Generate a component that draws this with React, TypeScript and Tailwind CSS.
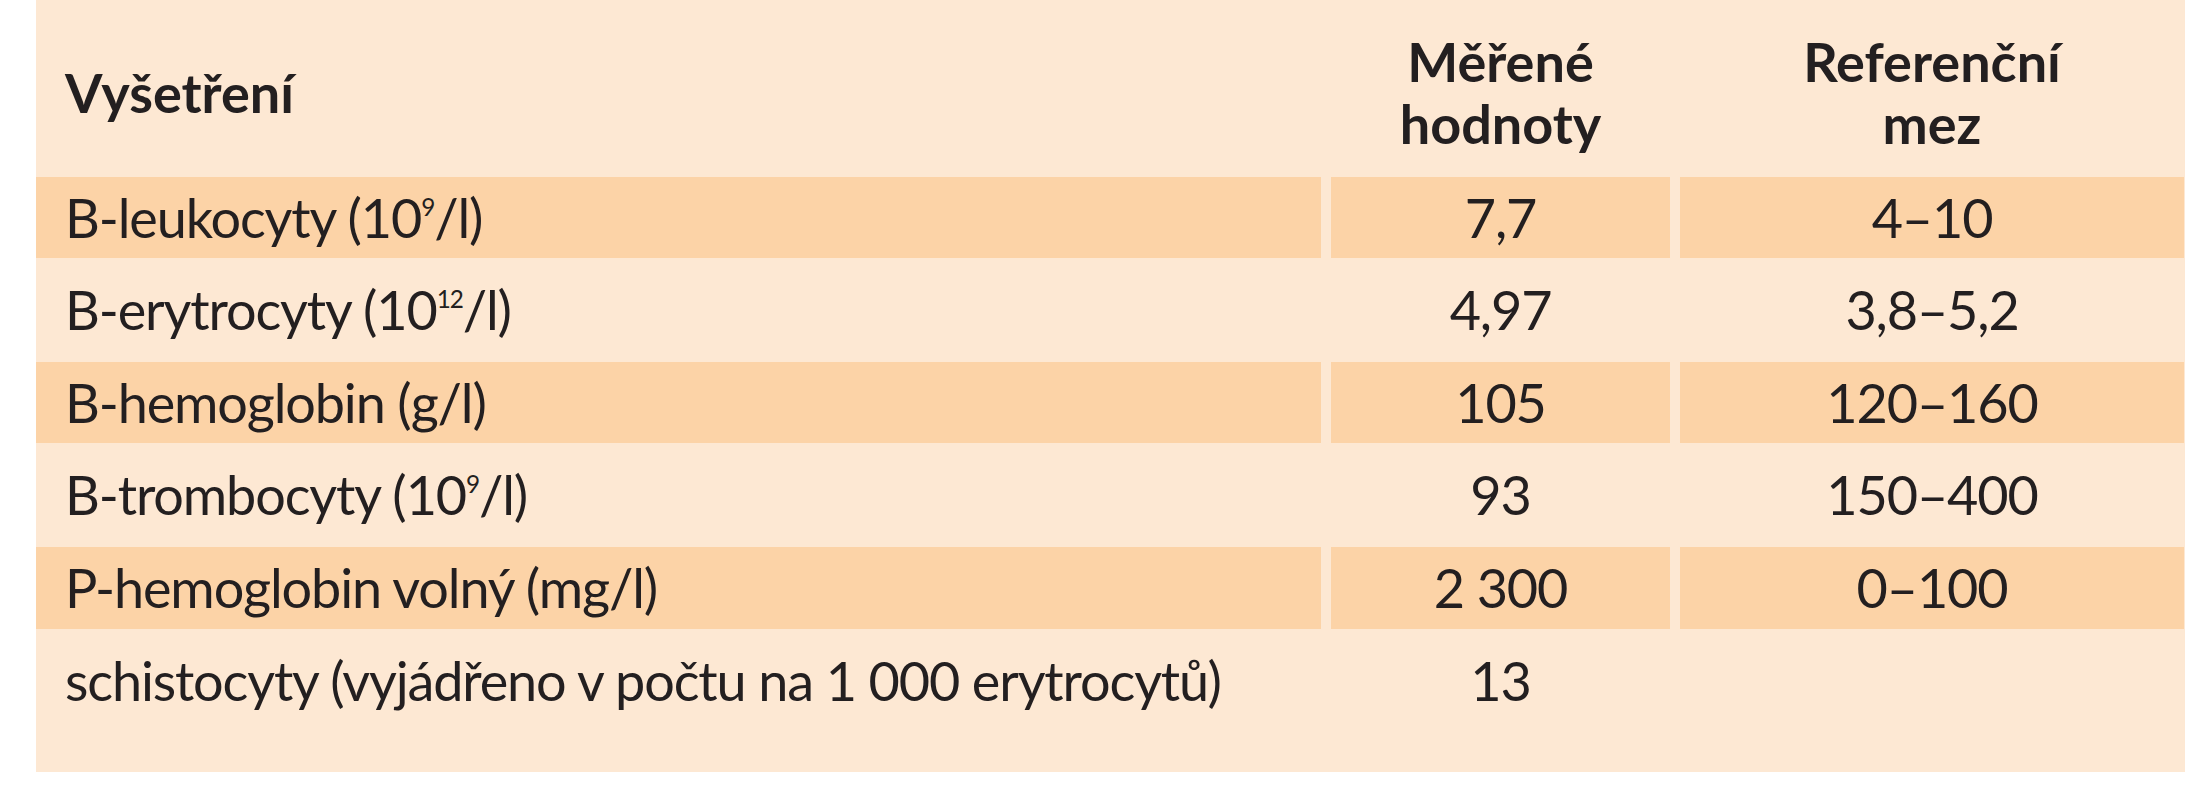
import React from "react";

const LIGHT = "bg-[#fde8d3]";

type Row = { name: React.ReactNode; value: string; ref: string; dark: boolean; h: string };

const Sup = ({ children }: { children: React.ReactNode }) => (
  <sup className="text-[0.45em] relative top-[-0.9em] align-baseline">{children}</sup>
);

const rows: Row[] = [
  {
    name: (
      <>
        B-leukocyty (10<Sup>9</Sup>/l)
      </>
    ),
    value: "7,7",
    ref: "4–10",
    dark: true,
    h: "h-[81px]",
  },
  {
    name: (
      <>
        B-erytrocyty (10<Sup>12</Sup>/l)
      </>
    ),
    value: "4,97",
    ref: "3,8–5,2",
    dark: false,
    h: "h-[104px]",
  },
  { name: "B-hemoglobin (g/l)", value: "105", ref: "120–160", dark: true, h: "h-[81px]" },
  {
    name: (
      <>
        B-trombocyty (10<Sup>9</Sup>/l)
      </>
    ),
    value: "93",
    ref: "150–400",
    dark: false,
    h: "h-[104px]",
  },
  { name: "P-hemoglobin volný (mg/l)", value: "2 300", ref: "0–100", dark: true, h: "h-[82px]" },
  {
    name: "schistocyty (vyjádřeno v počtu na 1 000 erytrocytů)",
    value: "13",
    ref: "",
    dark: false,
    h: "h-[104px]",
  },
];

export default function App() {
  return (
    <div className="w-[2209px] h-[800px] bg-white overflow-hidden">
      <div
        className={`ml-[36px] w-[2149px] ${LIGHT} pb-[39px] text-[#231f20] text-[54px] leading-none`}
        style={{ fontFamily: "Lato, 'Open Sans', sans-serif" }}
      >
        <div className="grid grid-cols-[1285px_339px_504px] gap-x-[10px] h-[177px] pt-[8px] font-bold">
          <div className="flex items-center pl-[29px]">Vyšetření</div>
          <div className="flex items-center justify-center text-center leading-[62px]">
            Měřené
            <br />
            hodnoty
          </div>
          <div className="flex items-center justify-center text-center leading-[62px]">
            Referenční
            <br />
            mez
          </div>
        </div>
        {rows.map((r, i) => {
          const cell = r.dark ? "bg-[#fcd3a7]" : "";
          return (
            <div
              key={i}
              className={`grid grid-cols-[1285px_339px_504px] gap-x-[10px] tracking-[-0.021em] ${r.h}`}
            >
              <div className={`flex items-center pl-[29px] whitespace-nowrap ${cell}`}>
                <span>{r.name}</span>
              </div>
              <div className={`flex items-center justify-center ${cell}`}>{r.value}</div>
              <div className={`flex items-center justify-center ${cell}`}>{r.ref}</div>
            </div>
          );
        })}
      </div>
    </div>
  );
}
